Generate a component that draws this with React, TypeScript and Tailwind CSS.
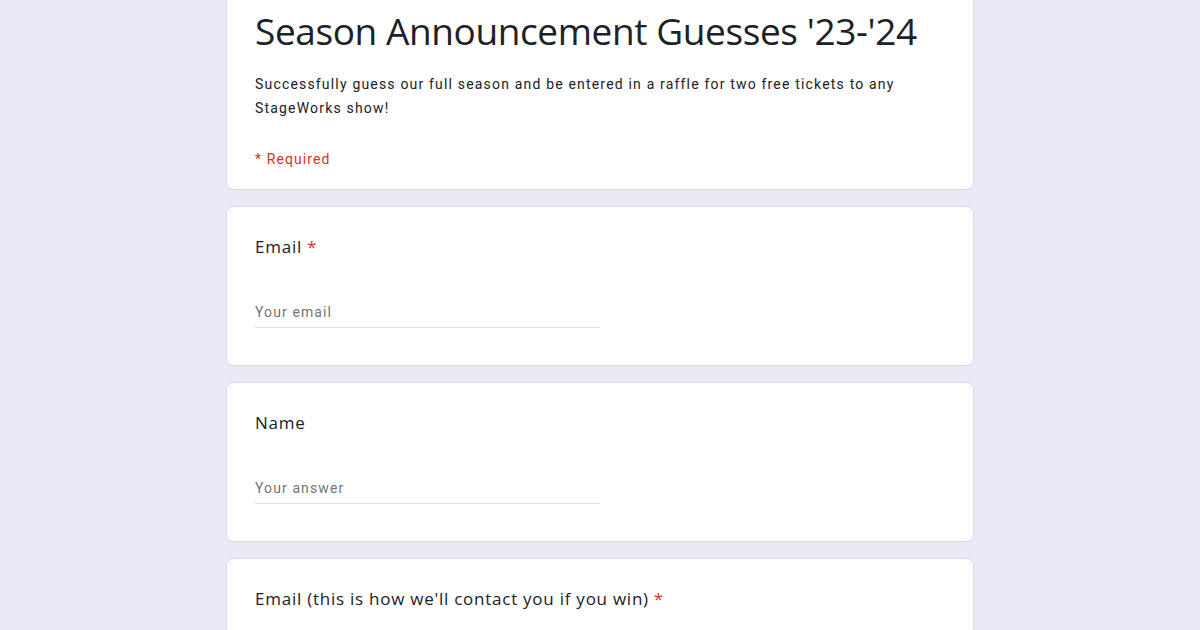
import React from "react";

function Question({ label, required, placeholder }: { label: string; required?: boolean; placeholder?: string }) {
  return (
    <div className="bg-white border border-[#dadce0] rounded-lg pt-[28px] pl-[28px] pr-[28px] pb-[37px] h-[160px]">
      <div className="text-[17px] leading-[24px] text-[#202124] font-['Open_Sans',sans-serif] tracking-[0.75px]">
        {label}
        {required && <span className="text-[#d93025] ml-[5px]">*</span>}
      </div>
      {placeholder && (
        <div className="mt-[41px] w-[345px] border-b border-[#e0e0e0] pb-[3px]">
          <div className="text-[14px] leading-[24px] text-[#70757a] font-['Roboto',sans-serif] tracking-[1.1px]">
            {placeholder}
          </div>
        </div>
      )}
    </div>
  );
}

export default function App() {
  return (
    <div className="w-[1200px] h-[630px] overflow-hidden bg-[#ede8f6]">
      <div className="w-[748px] mx-auto flex flex-col gap-[16px]">
        <div className="bg-white border border-t-0 border-[#dadce0] rounded-b-lg pl-[28px] pr-[28px] pt-[7px] h-[190px]">
          <div className="text-[37px] leading-[48px] text-[#202124] font-['Open_Sans',sans-serif] tracking-[-0.4px]">
            Season Announcement Guesses '23-'24
          </div>
          <div className="mt-[17px] text-[14px] leading-[24px] text-[#202124] font-['Roboto',sans-serif] tracking-[1.18px] w-[660px]">
            Successfully guess our full season and be entered in a raffle for two free tickets to any StageWorks show!
          </div>
          <div className="mt-[27px] text-[14px] leading-[24px] text-[#d93025] font-['Roboto',sans-serif] tracking-[1.1px]">
            * Required
          </div>
        </div>
        <Question label="Email" required placeholder="Your email" />
        <Question label="Name" placeholder="Your answer" />
        <Question label="Email (this is how we'll contact you if you win)" required />
      </div>
    </div>
  );
}
